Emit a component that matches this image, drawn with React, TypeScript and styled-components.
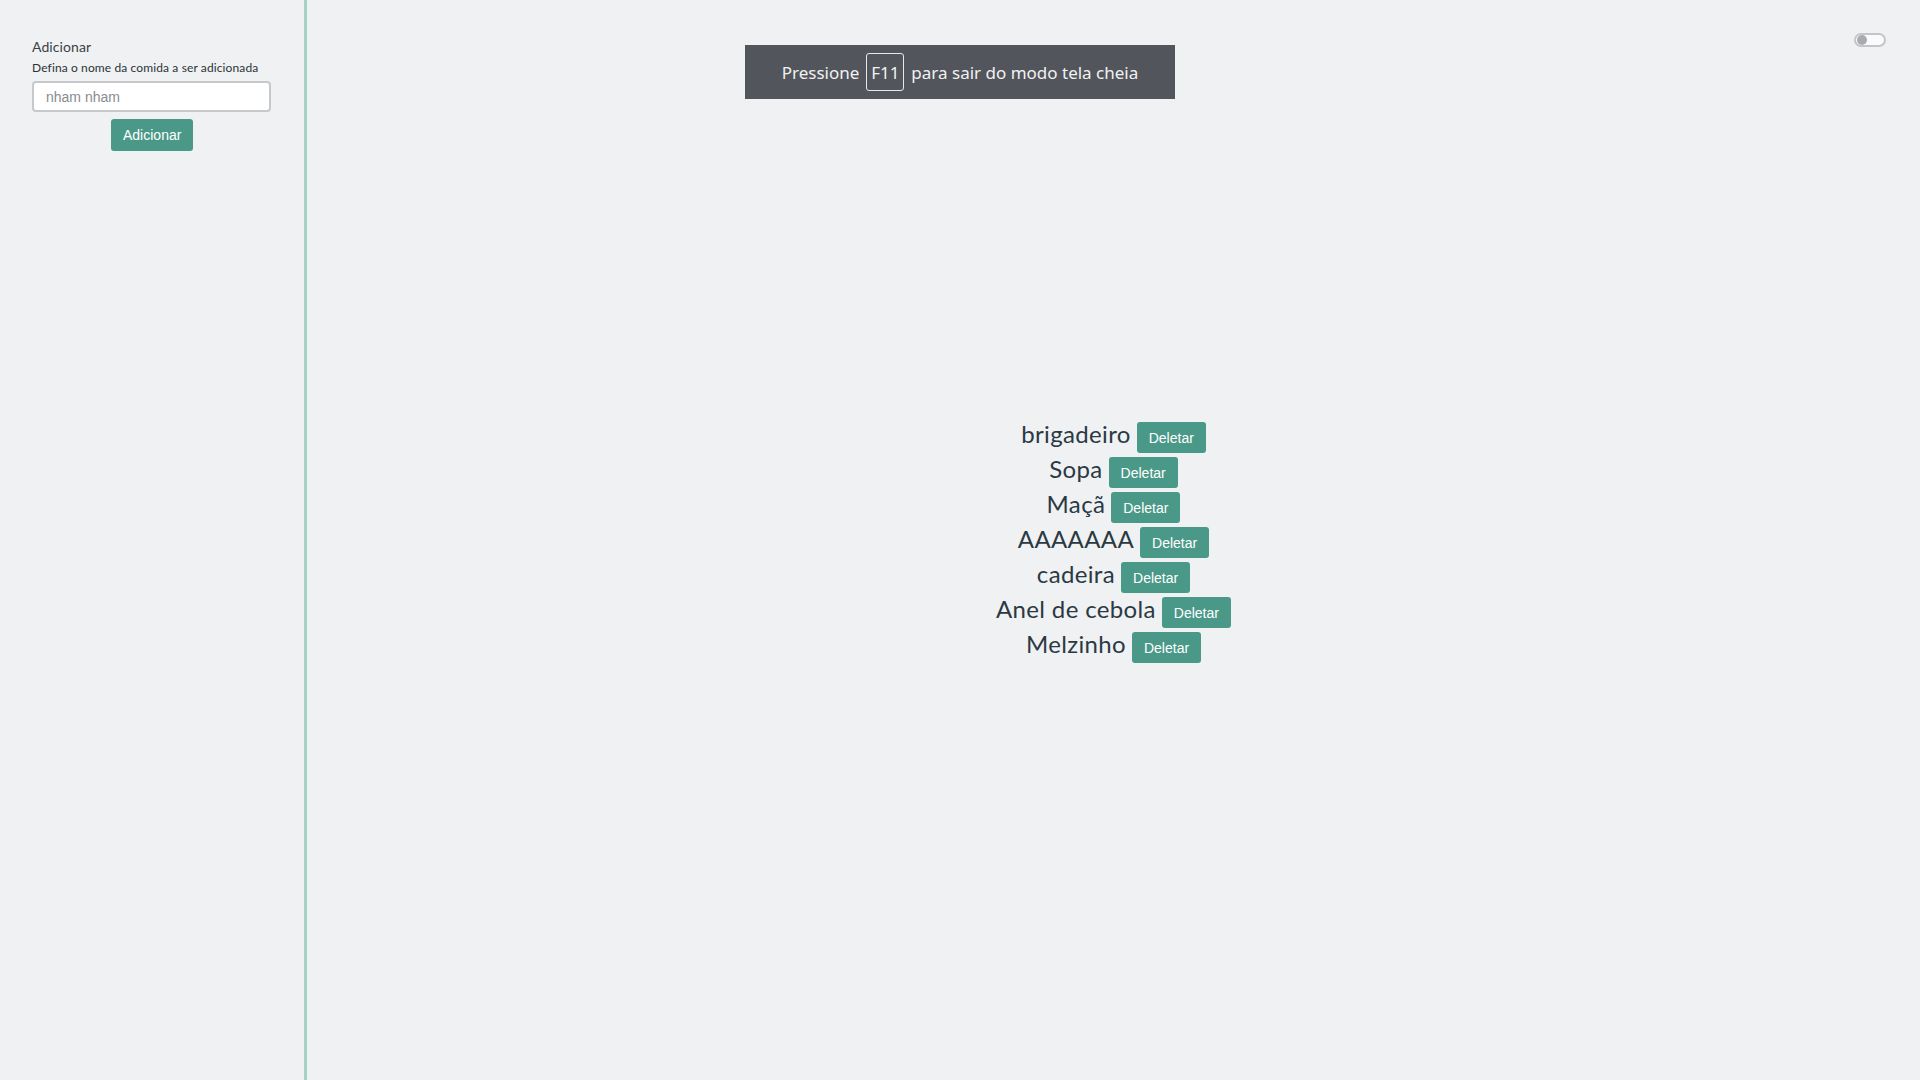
import React from "react";
import styled, { createGlobalStyle } from "styled-components";

const Global = createGlobalStyle`
  html, body { margin: 0; padding: 0; }
  body { background: #eff1f3; font-family: Lato, "Noto Sans", sans-serif; }
`;

const Page = styled.div`
  display: flex;
  height: 100vh;
  width: 100vw;
  overflow: hidden;
  background: #eff1f3;
`;

const Sidebar = styled.aside`
  width: 307px;
  flex: none;
  box-sizing: border-box;
  padding: 38px 36px 0 32px;
  border-right: 3px solid #a3d4c7;
  display: flex;
  flex-direction: column;
`;

const Label = styled.div`
  font-family: Lato, "Noto Sans", sans-serif;
  font-size: 14px;
  line-height: 18px;
  color: #3a4147;
  letter-spacing: 0.1px;
`;

const Hint = styled.div`
  font-family: Lato, "Noto Sans", sans-serif;
  font-size: 12px;
  line-height: 16px;
  color: #2b3338;
  margin-top: 4px;
  letter-spacing: 0.12px;
`;

const Input = styled.input`
  box-sizing: border-box;
  width: 239px;
  height: 31px;
  margin-top: 5px;
  padding: 0 12px;
  border: 2px solid #c5c9cc;
  border-radius: 4px;
  background: #fff;
  font-family: "Liberation Sans", Arial, sans-serif;
  font-size: 14px;
  outline: none;
  &::placeholder { color: #8a8d90; }
`;

const Button = styled.button<{ $h?: number }>`
  box-sizing: border-box;
  height: ${(p) => p.$h ?? 31}px;
  padding: 0 12px;
  border: none;
  border-radius: 3px;
  background: #4a9988;
  color: #ffffff;
  font-family: "Liberation Sans", Arial, sans-serif;
  font-size: 14px;
  cursor: pointer;
`;

const AddButton = styled(Button)`
  align-self: flex-start;
  margin-top: 7px;
  margin-left: 79px;
`;

const Main = styled.main`
  flex: 1;
  display: flex;
  flex-direction: column;
  align-items: center;
  justify-content: center;
  padding-top: 2px;
`;

const Row = styled.div`
  display: flex;
  align-items: baseline;
  gap: 6px;
  height: 35px;
`;

const Food = styled.span`
  font-family: Lato, "Noto Sans", sans-serif;
  font-size: 24px;
  letter-spacing: 0.35px;
  color: #2b3943;
`;

const Banner = styled.div`
  position: fixed;
  top: 45px;
  left: 745px;
  width: 430px;
  height: 54px;
  display: flex;
  align-items: center;
  justify-content: center;
  gap: 7px;
  background: #52555c;
  color: #f1f1f1;
  font-family: "Noto Sans", "Open Sans", sans-serif;
  font-size: 17px;
`;

const Key = styled.span`
  box-sizing: border-box;
  width: 38px;
  height: 38px;
  display: inline-flex;
  align-items: center;
  justify-content: center;
  border: 1px solid #e8e8e8;
  border-radius: 3px;
`;

const Toggle = styled.div`
  position: fixed;
  top: 33px;
  left: 1854px;
  box-sizing: border-box;
  width: 32px;
  height: 14px;
  border: 2px solid #c3c6c8;
  border-radius: 7px;
  background: #fbfbfb;
  display: flex;
  align-items: center;
  padding-left: 1px;
`;

const Knob = styled.span`
  width: 10px;
  height: 10px;
  border-radius: 50%;
  background: #a9acae;
`;

const foods = ["brigadeiro", "Sopa", "Maçã", "AAAAAAA", "cadeira", "Anel de cebola", "Melzinho"];

export default function App() {
  return (
    <>
      <Global />
      <Page>
        <Sidebar>
          <Label>Adicionar</Label>
          <Hint>Defina o nome da comida a ser adicionada</Hint>
          <Input placeholder="nham nham" />
          <AddButton $h={32}>Adicionar</AddButton>
        </Sidebar>
        <Main>
          {foods.map((f) => (
            <Row key={f}>
              <Food>{f}</Food>
              <Button>Deletar</Button>
            </Row>
          ))}
        </Main>
      </Page>
      <Banner>
        <span>Pressione</span>
        <Key>F11</Key>
        <span>para sair do modo tela cheia</span>
      </Banner>
      <Toggle>
        <Knob />
      </Toggle>
    </>
  );
}
